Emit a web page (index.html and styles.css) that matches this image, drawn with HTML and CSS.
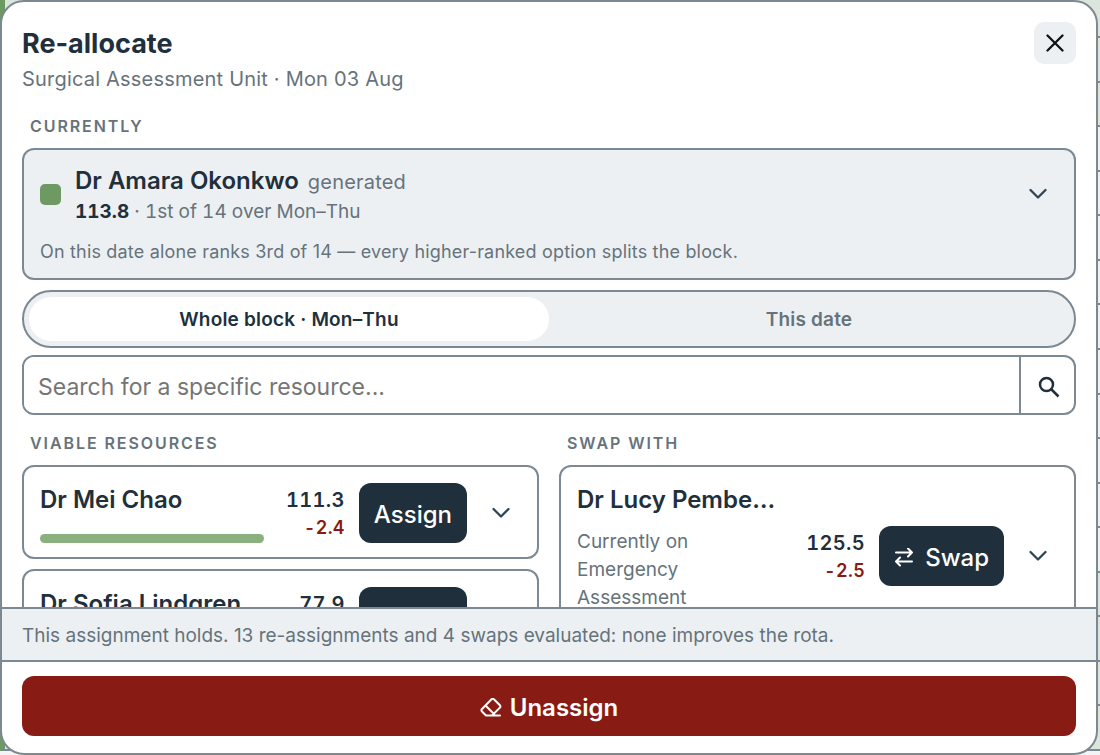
FILE: index.html
```html
<!DOCTYPE html>
<html lang="en">
<head>
<meta charset="utf-8">
<meta name="viewport" content="width=device-width, initial-scale=1">
<title>Re-allocate</title>
<link rel="stylesheet" href="styles.css">
</head>
<body>
<div class="rota" aria-hidden="true">
  <div class="rota-row rota-head good"></div>
  <div class="rota-row good"></div><div class="rota-row good"></div>
  <div class="rota-row"></div><div class="rota-row"></div><div class="rota-row"></div>
  <div class="rota-row"></div><div class="rota-row"></div><div class="rota-row"></div>
  <div class="rota-row"></div><div class="rota-row"></div><div class="rota-row"></div>
  <div class="rota-row"></div><div class="rota-row good"></div><div class="rota-row good"></div>
  <div class="rota-row good"></div><div class="rota-row good"></div>
</div>
<div class="dialog" role="dialog" aria-labelledby="title">
  <header class="header">
    <div class="heading">
      <h1 class="title" id="title">Re-allocate</h1>
      <p class="subtitle">Surgical Assessment Unit · Mon 03 Aug</p>
    </div>
    <button class="close" type="button" aria-label="Close">
      <svg width="18" height="18" viewBox="0 0 18 18"><path d="M1.500 1.500l15 15M16.500 1.500l-15 15"/></svg>
    </button>
  </header>

  <main class="content">
    <h2 class="label">Currently</h2>
    <section class="card current">
      <div class="current-row">
        <span class="swatch"></span>
        <div class="current-info">
          <div class="current-name"><span class="name">Dr Amara Okonkwo</span><span class="tag">generated</span></div>
          <div class="rank"><strong>113.8</strong> · 1st of 14 over Mon–Thu</div>
        </div>
        <button class="expand" type="button" aria-label="Show details">
          <svg width="18" height="12" viewBox="0 0 18 12"><path d="M1.500 2L9 9.500 16.500 2"/></svg>
        </button>
      </div>
      <p class="remark">On this date alone ranks 3rd of 14 — every higher-ranked option splits the block.</p>
    </section>

    <div class="segments">
      <button class="segment selected" type="button" aria-pressed="true">Whole block · Mon–Thu</button>
      <button class="segment" type="button" aria-pressed="false">This date</button>
    </div>

    <form class="search">
      <input class="search-input" type="text" aria-label="Search for a specific resource" placeholder="Search for a specific resource...">
      <button class="search-button" type="button" aria-label="Search">
        <svg width="22" height="22" viewBox="0 0 22 22"><circle cx="8.500" cy="8.500" r="6.500"/><path d="M13 13l7.500 7.500"/></svg>
      </button>
    </form>

    <div class="columns">
      <section class="column">
        <h2 class="label">Viable resources</h2>
        <article class="card option">
          <div class="person"><span class="name">Dr Mei Chao</span><span class="bar"></span></div>
          <div class="scores"><span class="score">111.3</span><span class="delta">-2.4</span></div>
          <button class="action" type="button">Assign</button>
          <button class="expand" type="button" aria-label="Show details">
            <svg width="18" height="12" viewBox="0 0 18 12"><path d="M1.500 2L9 9.500 16.500 2"/></svg>
          </button>
        </article>
        <article class="card option">
          <div class="person"><span class="name">Dr Sofia Lindgren</span><span class="bar"></span></div>
          <div class="scores"><span class="score">77.9</span><span class="delta">-35.8</span></div>
          <button class="action" type="button">Assign</button>
          <button class="expand" type="button" aria-label="Show details">
            <svg width="18" height="12" viewBox="0 0 18 12"><path d="M1.500 2L9 9.500 16.500 2"/></svg>
          </button>
        </article>
      </section>
      <section class="column">
        <h2 class="label">Swap with</h2>
        <article class="card option">
          <div class="person"><span class="name">Dr Lucy Pemberton</span><span class="place">Currently on Emergency Assessment</span><span class="bar bar-tight"></span></div>
          <div class="scores"><span class="score">125.5</span><span class="delta">-2.5</span></div>
          <button class="action" type="button">
            <svg width="20" height="20" viewBox="0 0 20 20"><path d="M2 4.500h16M14 0.500l4 4-4 4M18 13.500H2M6 9.500l-4 4 4 4"/></svg>
            Swap
          </button>
          <button class="expand" type="button" aria-label="Show details">
            <svg width="18" height="12" viewBox="0 0 18 12"><path d="M1.500 2L9 9.500 16.500 2"/></svg>
          </button>
        </article>
      </section>
    </div>
  </main>

  <p class="note">This assignment holds. 13 re-assignments and 4 swaps evaluated: none improves the rota.</p>
  <footer class="footer">
    <button class="unassign" type="button">
      <svg width="22" height="20" viewBox="0 0 22 20"><path d="M11.500 1.200q1.200-1 2.400 0l6 6q1 1.200 0 2.400L12 17.500H6L2 13.500q-1.200-1.200 0-2.500zM5.500 7.500l8.500 8.500M6 17.500h14"/></svg>
      Unassign
    </button>
  </footer>
</div>
</body>
</html>
```
FILE: styles.css
```css
:root {
  --ink: #1f303c;
  --muted: #66737b;
  --line: #7c8992;
  --fill: #ecf0f3;
  --danger: #881b13;
}

* { box-sizing: border-box; }

body {
  margin: 0;
  background: #f2f4f6;
  color: var(--ink);
  font-family: Inter, "Liberation Sans", sans-serif;
  font-size: 18px;
  line-height: 24px;
  overflow: hidden;
}

h1, h2, p { margin: 0; }

button, input { font: inherit; color: inherit; letter-spacing: inherit; }

button {
  display: flex;
  align-items: center;
  justify-content: center;
  margin: 0;
  padding: 0;
  border: 0;
  background: none;
  cursor: pointer;
}

svg {
  flex: none;
  fill: none;
  stroke: currentColor;
  stroke-width: 2;
  stroke-linecap: round;
  stroke-linejoin: round;
}

/* Rota grid behind the dialog */
.rota {
  position: absolute;
  inset: 0 0 4px;
  display: flex;
  flex-direction: column;
}
.rota-row {
  flex: 1;
  background: var(--fill);
  border-bottom: 2px solid var(--line);
  border-left: 5px solid #6f9963;
}
.rota-head { flex: 0 0 38px; }
.good { background: #dce5db; }

.dialog {
  position: relative;
  display: flex;
  flex-direction: column;
  height: 100vh;
  margin-right: 2px;
  overflow: hidden;
  background: #fff;
  border: 2px solid var(--line);
  border-radius: 24px;
}

.header {
  display: flex;
  justify-content: space-between;
  align-items: flex-start;
  padding: 20px 20px 0;
}
.title { font-size: 27px; line-height: 44px; font-weight: 700; }
.subtitle { font-size: 20px; line-height: 26px; color: var(--muted); letter-spacing: 0.01em; }
.close {
  width: 42px;
  height: 42px;
  border-radius: 10px;
  background: var(--fill);
  color: #0c1419;
}
.close svg { stroke-width: 2.3; }

.content {
  flex: 1;
  min-height: 0;
  overflow: hidden;
  padding: 22px 20px 0;
}

.label {
  padding: 0 8px;
  font-size: 16px;
  line-height: 24px;
  font-weight: 600;
  letter-spacing: 0.12em;
  text-transform: uppercase;
  color: var(--muted);
}

.card {
  border: 2px solid var(--line);
  border-radius: 12px;
  background: #fff;
}

.name {
  font-size: 24px;
  line-height: 36px;
  font-weight: 600;
  overflow: hidden;
  text-overflow: ellipsis;
  white-space: nowrap;
}

.expand { width: 40px; height: 40px; color: #2d4656; }
.expand svg { stroke-width: 2.3; }

.current {
  margin-top: 10px;
  padding: 13px 16px 12px;
  background: var(--fill);
}
.current-row { display: flex; align-items: center; gap: 14px; }
.swatch { width: 21px; height: 21px; border-radius: 5px; background: #6f9963; }
.current-info { flex: 1; }
.current-name { display: flex; align-items: baseline; gap: 9px; }
.tag { font-size: 20px; color: var(--muted); letter-spacing: 0.01em; }
.rank {
  font-size: 19px;
  line-height: 26px;
  color: var(--muted);
  font-variant-numeric: tabular-nums;
}
.rank strong { font-weight: 700; color: var(--ink); }
.remark { margin-top: 13px; line-height: 28px; color: var(--muted); letter-spacing: 0.01em; }

.segments {
  display: flex;
  margin-top: 10px;
  padding: 5px;
  border: 2px solid var(--line);
  border-radius: 30px;
  background: var(--fill);
}
.segment {
  flex: 1;
  height: 44px;
  padding-top: 2px;
  border-radius: 22px;
  font-size: 19px;
  font-weight: 600;
  letter-spacing: 0.01em;
  color: var(--muted);
}
.segment.selected { background: #fff; color: var(--ink); }

.search {
  display: flex;
  height: 60px;
  margin-top: 7px;
  border: 2px solid var(--line);
  border-radius: 12px;
  overflow: hidden;
}
.search-input {
  flex: 1;
  min-width: 0;
  padding: 4px 14px 0;
  border: 0;
  outline: 0;
  background: #fff;
  font-size: 23px;
}
.search-input::placeholder { color: #757575; opacity: 1; }
.search-button { width: 55px; padding: 4px 0 0 3px; border-left: 2px solid var(--line); }
.search-button svg { stroke-width: 2.5; stroke-linecap: butt; }

.columns {
  display: grid;
  grid-template-columns: 1fr 1fr;
  align-items: start;
  gap: 20px;
  margin-top: 16px;
}
.column { display: flex; flex-direction: column; gap: 10px; min-width: 0; }

.option { display: flex; align-items: center; padding: 15px 16px 14px; }
.person { flex: 1; min-width: 0; display: flex; flex-direction: column; margin-right: 15px; }
.bar { height: 9px; margin-top: 16px; border-radius: 5px; background: #8bb07f; }
.bar-tight { margin-top: 9px; }
.place {
  max-width: 130px;
  margin-top: 10px;
  font-size: 19px;
  line-height: 28px;
  color: var(--muted);
}
.scores {
  display: flex;
  flex-direction: column;
  align-items: flex-end;
  min-width: 66px;
  padding-top: 2px;
  font-weight: 600;
  line-height: 27px;
  font-variant-numeric: tabular-nums;
  letter-spacing: 0.02em;
}
.score { font-size: 20px; }
.delta { color: var(--danger); }

.action {
  gap: 11px;
  height: 60px;
  margin: 0 14px;
  padding: 4px 15px 0;
  border-radius: 12px;
  background: var(--ink);
  color: #fff;
  font-size: 24px;
  font-weight: 500;
}

.note {
  padding: 13px 20px 10px;
  border-top: 2px solid var(--line);
  border-bottom: 2px solid var(--line);
  background: var(--fill);
  font-size: 19px;
  line-height: 28px;
  color: var(--muted);
}
.footer { padding: 14px 20px 17px; }
.unassign {
  gap: 8px;
  width: 100%;
  height: 60px;
  padding-top: 3px;
  border-radius: 12px;
  background: var(--danger);
  color: #fff;
  font-size: 24px;
  font-weight: 600;
}
```
